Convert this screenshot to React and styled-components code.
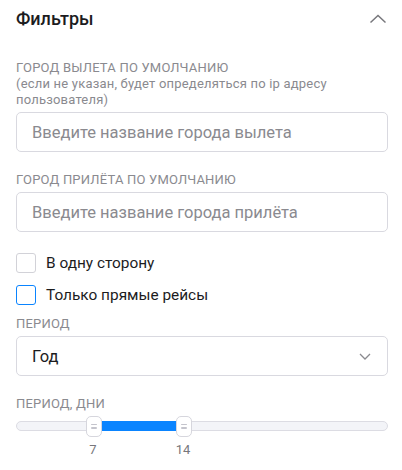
import React from "react";
import styled, { createGlobalStyle } from "styled-components";

const Global = createGlobalStyle`
  html, body { margin: 0; padding: 0; background: #fff; }
  body { font-family: Roboto, "Noto Sans", Arial, sans-serif; color: #1c1c1e; }
  * { box-sizing: border-box; }
`;

const Panel = styled.div`
  width: 402px;
  padding: 7px 14px 0 16px;
  display: flex;
  flex-direction: column;
`;

const Header = styled.div`
  display: flex;
  align-items: center;
  justify-content: space-between;
  height: 24px;
  margin-bottom: 29px;
`;

const Title = styled.h2`
  margin: 0;
  font-size: 18px;
  line-height: 24px;
  font-weight: 500;
  color: #1c1c1e;
`;

const IconButton = styled.button`
  border: 0;
  background: none;
  padding: 0;
  width: 20px;
  height: 20px;
  display: flex;
  align-items: center;
  justify-content: center;
  color: #77777c;
`;

const Field = styled.div`
  display: flex;
  flex-direction: column;
  gap: 4px;
  margin-bottom: ${(p) => p.$mb ?? 20}px;
`;

const Label = styled.label`
  font-size: 13px;
  line-height: 16px;
  color: #8a8a8f;
  letter-spacing: 0.2px;
`;

const Upper = styled.span`
  text-transform: uppercase;
`;

const Input = styled.input`
  width: 372px;
  height: 40px;
  border: 1px solid #d9d9e0;
  border-radius: 5px;
  padding: 0 15px;
  font-family: inherit;
  font-size: 16.5px;
  color: #1c1c1e;
  outline: none;
  &::placeholder { color: #8a8a8f; }
`;

const Checks = styled.div`
  display: flex;
  flex-direction: column;
  gap: 12px;
  margin-bottom: 11px;
`;

const CheckRow = styled.label`
  display: flex;
  align-items: center;
  gap: 10px;
  height: 20px;
  font-size: 15.4px;
  color: #1c1c1e;
`;

const Box = styled.span`
  width: 20px;
  height: 20px;
  border-radius: 3px;
  border: 1px solid ${(p) => (p.$focus ? "#0a84ff" : "#d2d2d8")};
  background: #fff;
  flex: none;
`;

const Select = styled.div`
  width: 372px;
  height: 40px;
  border: 1px solid #d9d9e0;
  border-radius: 5px;
  padding: 0 15px;
  display: flex;
  align-items: center;
  justify-content: space-between;
  font-size: 16.5px;
  color: #1c1c1e;
`;

const Chevron = styled.svg`
  display: block;
  margin-right: 1px;
`;

const SliderWrap = styled.div`
  display: flex;
  flex-direction: column;
  width: 372px;
  padding-top: 5px;
`;

const Track = styled.div`
  position: relative;
  height: 10px;
  border-radius: 5px;
  border: 1px solid #dcdce3;
  background: #f3f4f8;
`;

const Fill = styled.div`
  position: absolute;
  top: -1px;
  bottom: -1px;
  background: #0a84ff;
`;

const Thumb = styled.div`
  position: absolute;
  top: 50%;
  width: 16px;
  height: 21px;
  margin-top: -10.5px;
  background: #fff;
  border: 1px solid #d6d6dd;
  border-radius: 5px;
  display: flex;
  flex-direction: column;
  align-items: center;
  justify-content: center;
  gap: 2px;
  &::before, &::after {
    content: "";
    width: 6px;
    height: 1.5px;
    background: #c4c4cc;
    border-radius: 1px;
  }
`;

const Marks = styled.div`
  position: relative;
  height: 20px;
  margin-top: 11px;
`;

const Mark = styled.span`
  position: absolute;
  top: 0;
  transform: translateX(-50%);
  font-size: 13px;
  line-height: 16px;
  color: #77777c;
`;

const thumbs = [
  { value: 7, left: 69 },
  { value: 14, left: 159 },
];

export default function App() {
  return (
    <>
      <Global />
      <Panel>
        <Header>
          <Title>Фильтры</Title>
          <IconButton aria-label="Свернуть">
            <svg width="18" height="10" viewBox="0 0 18 10">
              <path d="M1.5 8.5 L9 1.5 L16.5 8.5" fill="none" stroke="currentColor" strokeWidth="1.5" />
            </svg>
          </IconButton>
        </Header>

        <Field>
          <Label>
            <Upper>Город вылета по умолчанию</Upper>
            <br />
            (если не указан, будет определяться по ip адресу пользователя)
          </Label>
          <Input placeholder="Введите название города вылета" />
        </Field>

        <Field $mb={21}>
          <Label><Upper>Город прилёта по умолчанию</Upper></Label>
          <Input placeholder="Введите название города прилёта" />
        </Field>

        <Checks>
          <CheckRow><Box />В одну сторону</CheckRow>
          <CheckRow><Box $focus />Только прямые рейсы</CheckRow>
        </Checks>

        <Field>
          <Label><Upper>Период</Upper></Label>
          <Select>
            <span>Год</span>
            <Chevron width="12" height="7" viewBox="0 0 12 7">
              <path d="M1 1 L6 6 L11 1" fill="none" stroke="#8a8a8f" strokeWidth="1.3" />
            </Chevron>
          </Select>
        </Field>

        <Field $mb={0}>
          <Label><Upper>Период, дни</Upper></Label>
          <SliderWrap>
            <Track>
              <Fill style={{ left: thumbs[0].left + 16, width: thumbs[1].left - thumbs[0].left - 16 }} />
              {thumbs.map((t) => (
                <Thumb key={t.value} style={{ left: t.left }} />
              ))}
            </Track>
            <Marks>
              {thumbs.map((t) => (
                <Mark key={t.value} style={{ left: t.left + 8 }}>{t.value}</Mark>
              ))}
            </Marks>
          </SliderWrap>
        </Field>
      </Panel>
    </>
  );
}
